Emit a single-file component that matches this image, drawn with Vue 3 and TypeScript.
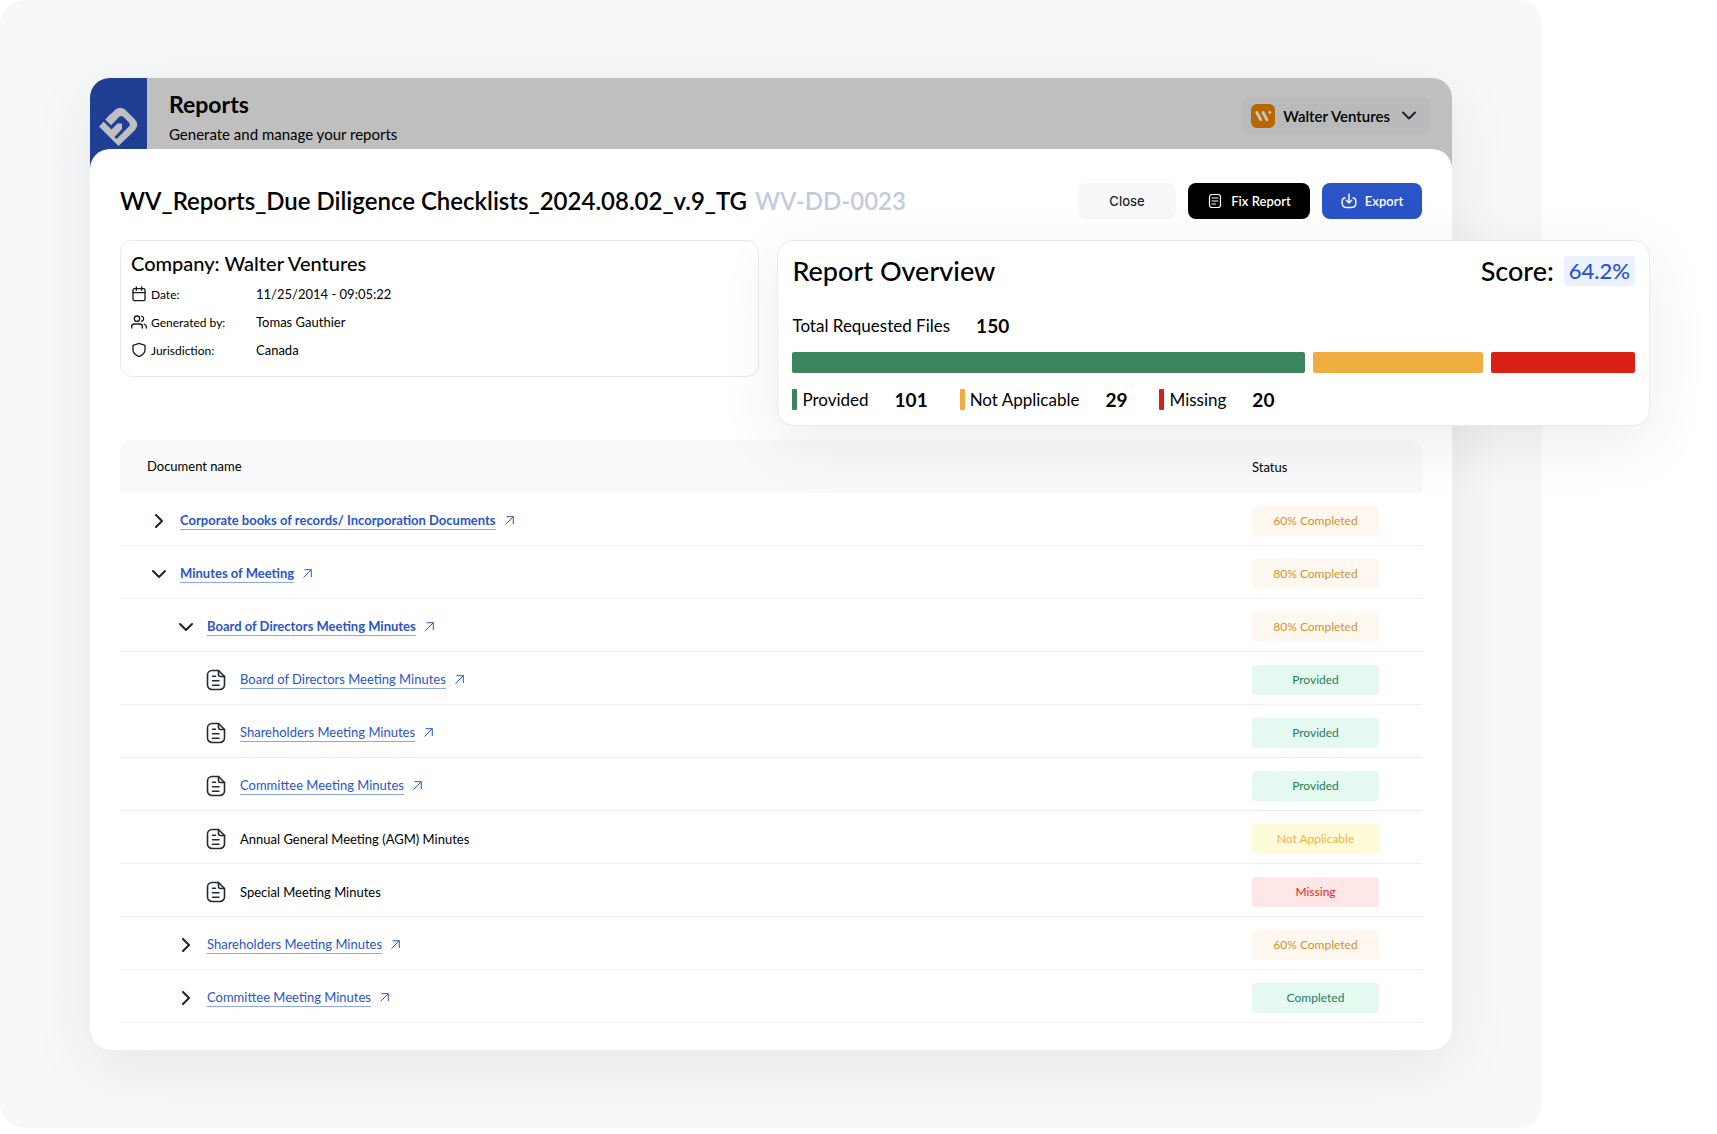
<script setup lang="ts">
import { ref } from 'vue'

type Tone = 'progress' | 'ok' | 'na' | 'missing'

interface DocRow {
  name: string
  level: 0 | 1 | 2
  kind: 'open' | 'closed' | 'file'
  link: boolean
  bold: boolean
  status: string
  tone: Tone
}

const meta = [
  { icon: 'calendar', label: 'Date:', value: '11/25/2014 - 09:05:22' },
  { icon: 'users', label: 'Generated by:', value: 'Tomas Gauthier' },
  { icon: 'shield', label: 'Jurisdiction:', value: 'Canada' },
]

const segments = [
  { label: 'Provided', count: 101, share: 512, color: '#3c865d' },
  { label: 'Not Applicable', count: 29, share: 169, color: '#f1ae40' },
  { label: 'Missing', count: 20, share: 144, color: '#d92015' },
]

const rows = ref<DocRow[]>([
  { name: 'Corporate books of records/ Incorporation Documents', level: 0, kind: 'closed', link: true, bold: true, status: '60% Completed', tone: 'progress' },
  { name: 'Minutes of Meeting', level: 0, kind: 'open', link: true, bold: true, status: '80% Completed', tone: 'progress' },
  { name: 'Board of Directors Meeting Minutes', level: 1, kind: 'open', link: true, bold: true, status: '80% Completed', tone: 'progress' },
  { name: 'Board of Directors Meeting Minutes', level: 2, kind: 'file', link: true, bold: false, status: 'Provided', tone: 'ok' },
  { name: 'Shareholders Meeting Minutes', level: 2, kind: 'file', link: true, bold: false, status: 'Provided', tone: 'ok' },
  { name: 'Committee Meeting Minutes', level: 2, kind: 'file', link: true, bold: false, status: 'Provided', tone: 'ok' },
  { name: 'Annual General Meeting (AGM) Minutes', level: 2, kind: 'file', link: false, bold: false, status: 'Not Applicable', tone: 'na' },
  { name: 'Special Meeting Minutes', level: 2, kind: 'file', link: false, bold: false, status: 'Missing', tone: 'missing' },
  { name: 'Shareholders Meeting Minutes', level: 1, kind: 'closed', link: true, bold: false, status: '60% Completed', tone: 'progress' },
  { name: 'Committee Meeting Minutes', level: 1, kind: 'closed', link: true, bold: false, status: 'Completed', tone: 'ok' },
])
</script>

<template>
  <div class="stage">
    <div class="app">
      <header class="topbar">
        <div class="brand">
          <svg viewBox="0 0 48 48" width="48" height="48" aria-hidden="true">
            <path fill="#bfbfbf" d="M11 18 21.500 7.500Q26 4 31 7.500L41 17.500Q45.500 22.500 41 28L24.500 44 5 24.500Z" />
            <path fill="#1f3f95" d="M5 19 9 15 11.500 17.500 17 23 25.500 14.500Q27 13.500 29 14.500L35 20.500Q36.500 22.500 35 24.500L22.500 37 20.500 35 28 27V21.500H23.500L17.500 27.500 9.500 19.500 5 24Z" />
            <path fill="#bfbfbf" d="M11.500 17.500 17 23 23 17 17 11.500Z" />
          </svg>
        </div>
        <div class="heading">
          <h1>Reports</h1>
          <p>Generate and manage your reports</p>
        </div>
        <button class="company" type="button">
          <svg viewBox="0 0 24 24" width="24" height="24" aria-hidden="true">
            <rect width="24" height="24" rx="6" fill="#b96700" />
            <g stroke="#c9c9c9" stroke-width="2.800" stroke-linecap="round" fill="none">
              <path d="M5.800 8.500 9.800 15.800" />
              <path d="M12 8.500 16 15.800" />
            </g>
            <circle cx="18.800" cy="8.500" r="1.400" fill="#c9c9c9" />
          </svg>
          <span>Walter Ventures</span>
          <svg viewBox="0 0 14 14" width="14" height="14" aria-hidden="true">
            <path d="M1 3.500 7 9.500 13 3.500" fill="none" stroke="#1d242c" stroke-width="2" stroke-linecap="round" stroke-linejoin="round" />
          </svg>
        </button>
      </header>

      <main class="sheet">
        <div class="title-row">
          <h2>WV_Reports_Due Diligence Checklists_2024.08.02_v.9_TG</h2>
          <span class="code">WV-DD-0023</span>
          <div class="actions">
            <button class="btn close" type="button">Close</button>
            <button class="btn fix" type="button">
              <svg viewBox="0 0 16 16" width="16" height="16" aria-hidden="true" fill="none" stroke="#fff" stroke-linecap="round">
                <rect x="2.500" y="1.500" width="11" height="13" rx="2.500" stroke-width="1.200" />
                <path d="M5 5h6M5 8h6M5 11h3.500" stroke-width="1.200" />
              </svg>
              Fix Report
            </button>
            <button class="btn export" type="button">
              <svg viewBox="0 0 16 16" width="16" height="16" aria-hidden="true" fill="none" stroke="#fff" stroke-width="1.400" stroke-linecap="round" stroke-linejoin="round">
                <path d="M8 1v9M5.300 7.300 8 10l2.700-2.700" />
                <path d="M4 5C2 5 1.200 6.500 1.200 8v2c0 3 1.300 4.500 4 4.500h5.600c2.700 0 4-1.500 4-4.500V8c0-1.500-.8-3-2.800-3" />
              </svg>
              Export
            </button>
          </div>
        </div>

        <div class="cards">
          <section class="info">
            <h3>Company: Walter Ventures</h3>
            <dl>
              <div v-for="m in meta" :key="m.label">
                <dt>
                  <svg viewBox="0 0 24 24" width="16" height="16" aria-hidden="true" fill="none" stroke="#1c1c1c" stroke-width="2" stroke-linecap="round" stroke-linejoin="round">
                    <template v-if="m.icon === 'calendar'">
                      <rect x="3" y="4" width="18" height="18" rx="2" />
                      <path d="M16 1.500v5M8 1.500v5M3 10h18" />
                    </template>
                    <template v-else-if="m.icon === 'users'">
                      <path d="M17 21v-2a4 4 0 0 0-4-4H5a4 4 0 0 0-4 4v2" />
                      <circle cx="9" cy="7" r="4" />
                      <path d="M23 21v-2a4 4 0 0 0-3-3.870M16 3.130a4 4 0 0 1 0 7.750" />
                    </template>
                    <path v-else d="M12 22s9-4 9-10V5l-9-3-9 3v7c0 6 9 10 9 10z" />
                  </svg>
                  {{ m.label }}
                </dt>
                <dd>{{ m.value }}</dd>
              </div>
            </dl>
          </section>

          <section class="overview">
            <div class="overview-head">
              <h3>Report Overview</h3>
              <p class="score">Score: <strong>64.2%</strong></p>
            </div>
            <p class="total">Total Requested Files <b>150</b></p>
            <div class="bar">
              <span v-for="s in segments" :key="s.label" :style="{ flexGrow: s.share, background: s.color }"></span>
            </div>
            <ul class="legend">
              <li v-for="s in segments" :key="s.label">
                <i :style="{ background: s.color }"></i>
                <span>{{ s.label }}</span>
                <b>{{ s.count }}</b>
              </li>
            </ul>
          </section>
        </div>

        <table>
          <thead>
            <tr>
              <th scope="col">Document name</th>
              <th scope="col" class="status-col">Status</th>
            </tr>
          </thead>
          <tbody>
            <tr v-for="(r, i) in rows" :key="i">
              <td>
                <div class="doc" :class="['level-' + r.level, { bold: r.bold }]">
                  <svg v-if="r.kind === 'file'" class="file" viewBox="0 0 20 22" width="20" height="22" aria-hidden="true" fill="none" stroke="#232b33" stroke-width="1.600" stroke-linecap="round" stroke-linejoin="round">
                    <path d="M12.500 1.500H6A4.500 4.500 0 0 0 1.500 6v10A4.500 4.500 0 0 0 6 20.500h8a4.500 4.500 0 0 0 4.500-4.500V7.500Z" />
                    <path d="M12.500 1.500V5.500a2 2 0 0 0 2 2h4" />
                    <path d="M6.500 7.200h3M6.500 11.700h6.500M6.500 16.200h6.500" />
                  </svg>
                  <button v-else class="toggle" type="button" :aria-label="r.kind === 'open' ? 'Collapse' : 'Expand'">
                    <svg viewBox="0 0 14 14" width="14" height="14" aria-hidden="true" fill="none" stroke="#1d242c" stroke-width="2" stroke-linecap="round" stroke-linejoin="round">
                      <path v-if="r.kind === 'open'" d="M1 4 7 10 13 4" />
                      <path v-else d="M4 1 10 7 4 13" />
                    </svg>
                  </button>
                  <template v-if="r.link">
                    <a href="#">{{ r.name }}</a>
                    <svg class="out" viewBox="0 0 9 9" width="9" height="9" aria-hidden="true" fill="none" stroke="#2a54c8" stroke-width="1">
                      <path d="M.500 8.500 8.300 .700M1.500 .700H8.300V8" />
                    </svg>
                  </template>
                  <span v-else>{{ r.name }}</span>
                </div>
              </td>
              <td class="status-col"><span class="badge" :class="r.tone">{{ r.status }}</span></td>
            </tr>
          </tbody>
        </table>
      </main>
    </div>
  </div>
</template>

<style>
body {
  margin: 0;
  background: #fff;
}
</style>

<style scoped>
.stage {
  box-sizing: border-box;
  margin-right: 175px;
  padding: 78px 90px;
  background: #f6f8fa;
  border-radius: 24px;
  font-family: Lato, "Liberation Sans", sans-serif;
  color: #000;
}

h1,
h2,
h3,
p,
dl,
dd,
ul {
  margin: 0;
  padding: 0;
}

button {
  font: inherit;
  border: 0;
  margin: 0;
}

.app {
  border-radius: 20px;
  background: #bfbfbf;
  box-shadow: 0 16px 64px rgba(0, 0, 0, 0.08);
}

.topbar {
  display: flex;
  align-items: flex-start;
  height: 71px;
}

.brand {
  box-sizing: border-box;
  width: 57px;
  height: 92px;
  padding: 24px 4px 0;
  background: #1f3f95;
  border-radius: 20px 0 0 0;
}

.heading {
  flex: 1;
  padding: 11px 0 0 22px;
}

.heading h1 {
  font-size: 23px;
  line-height: 30px;
  font-weight: 700;
}

.heading p {
  margin-top: 4px;
  font-size: 15px;
  line-height: 22px;
}

.company {
  display: flex;
  align-items: center;
  gap: 8px;
  height: 38px;
  margin: 19px 22px 0 0;
  padding: 0 14px 0 9px;
  border-radius: 8px;
  background: #b9babc;
  color: #000;
  font-size: 15px;
  font-weight: 600;
}

.company span {
  margin-right: 4px;
}

.sheet {
  position: relative;
  padding: 34px 30px 27px;
  background: #fff;
  border-radius: 20px;
}

.title-row {
  display: flex;
  align-items: center;
  height: 36px;
}

.title-row h2,
.code {
  font-size: 24px;
  line-height: 30px;
  font-weight: 600;
}

.code {
  margin-left: 8px;
  color: #c3cbdf;
}

.actions {
  display: flex;
  gap: 12px;
  margin-left: auto;
}

.btn {
  display: flex;
  align-items: center;
  justify-content: center;
  gap: 8px;
  height: 36px;
  border-radius: 8px;
  font-size: 13px;
  font-weight: 600;
  color: #fff;
}

.close {
  width: 98px;
  background: #f7f8fa;
  color: #1d242c;
  font-family: Inter, sans-serif;
  font-weight: 500;
}

.fix {
  width: 122px;
  background: #000;
}

.export {
  width: 100px;
  background: #2a54c8;
}

.cards {
  display: flex;
  align-items: flex-start;
  gap: 18px;
  margin-top: 21px;
}

.info {
  box-sizing: border-box;
  flex: 617;
  height: 137px;
  padding: 9px 10px;
  border: 1px solid #e9e9f0;
  border-radius: 12px;
}

.info h3 {
  font-size: 20px;
  line-height: 26px;
  font-weight: 500;
}

dl {
  margin-top: 4px;
}

dl div {
  display: flex;
  align-items: center;
  height: 28px;
}

dt {
  display: flex;
  align-items: center;
  gap: 4px;
  width: 125px;
  font-size: 12px;
}

dd {
  font-size: 13px;
}

.overview {
  box-sizing: border-box;
  position: relative;
  z-index: 1;
  flex: 842;
  height: 186px;
  margin-right: -228px;
  padding: 14px 14px 0;
  background: #fff;
  border: 1px solid #e9e9f0;
  border-radius: 16px;
  box-shadow: 0 16px 64px rgba(0, 0, 0, 0.08);
}

.overview-head {
  display: flex;
  justify-content: space-between;
  align-items: center;
}

.overview-head h3,
.score {
  font-size: 27px;
  line-height: 32px;
  font-weight: 500;
}

.score {
  display: flex;
  align-items: center;
  gap: 10px;
}

.score strong {
  padding: 0 5px;
  border-radius: 4px;
  background: #ebf1ff;
  color: #2a54c8;
  font-size: 22px;
  line-height: 30px;
  font-weight: 500;
}

.total {
  display: flex;
  align-items: center;
  gap: 26px;
  margin-top: 27px;
  font-size: 17px;
  line-height: 24px;
}

.total b,
.legend b {
  font-size: 19px;
  font-weight: 700;
}

.bar {
  display: flex;
  gap: 8px;
  margin-top: 14px;
}

.bar span {
  height: 21px;
  border-radius: 2px;
}

.legend {
  display: flex;
  gap: 32px;
  margin-top: 16px;
  list-style: none;
  font-size: 17px;
  line-height: 21px;
}

.legend li {
  display: flex;
  align-items: center;
}

.legend i {
  width: 5px;
  height: 21px;
  margin-right: 5px;
  border-radius: 1px;
}

.legend b {
  margin-left: 26px;
}

table {
  width: 100%;
  margin-top: 14px;
  border-collapse: separate;
  border-spacing: 0;
  table-layout: fixed;
}

th {
  height: 53px;
  box-sizing: border-box;
  padding: 0 0 2px 27px;
  background: #f9f9fb;
  text-align: left;
  font-size: 13px;
  font-weight: 400;
}

th:first-child {
  border-radius: 12px 0 0 0;
}

th:last-child {
  border-radius: 0 12px 0 0;
}

td {
  box-sizing: border-box;
  height: 53px;
  padding: 0;
  border-bottom: 1px solid #efeff1;
}

.status-col {
  width: 170px;
}

th.status-col {
  padding: 0;
}

.doc {
  display: flex;
  align-items: center;
  padding-top: 3px;
  font-size: 13px;
}

.doc.bold {
  font-weight: 700;
}

.level-0 {
  padding-left: 32px;
}

.level-1 {
  padding-left: 59px;
}

.level-2 {
  padding-left: 86px;
}

.toggle {
  display: flex;
  width: 14px;
  height: 14px;
  margin-right: 14px;
  padding: 0;
  background: none;
}

.file {
  margin-right: 14px;
}

.doc a {
  color: #2a54c8;
  line-height: 17px;
  text-decoration: none;
  border-bottom: 1px solid #8fa6e6;
}

.out {
  margin-left: 9px;
}

.badge {
  display: block;
  width: 127px;
  margin-top: 4px;
  border-radius: 4px;
  font-size: 12px;
  line-height: 30px;
  text-align: center;
}

.progress {
  background: #fef8f0;
  color: #d4922b;
}

.ok {
  background: #e4f9f0;
  color: #1f7f57;
}

.na {
  background: #fefbd9;
  color: #f2b24b;
}

.missing {
  background: #ffe7e7;
  color: #dc2a22;
}
</style>
